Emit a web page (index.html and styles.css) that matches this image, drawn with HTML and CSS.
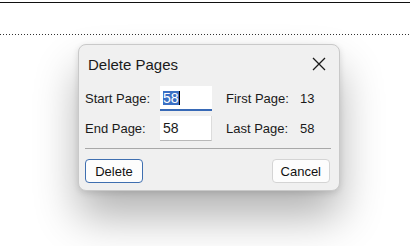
FILE: index.html
```html
<!DOCTYPE html>
<html lang="en">
<head>
    <meta charset="UTF-8">
    <meta name="viewport" content="width=device-width, initial-scale=1.0">
    <title>Delete Pages</title>
    <link rel="stylesheet" href="styles.css">
</head>
<body>
    <div class="page">
        <div class="rule-top"></div>
        <div class="rule-dotted"></div>

        <!-- Delete pages dialog -->
        <div class="dialog">
            <div class="dialog-title">
                <span>Delete Pages</span>
                <svg class="close" width="14" height="14" viewBox="0 0 14 14">
                    <path d="M1 1 L13 13 M13 1 L1 13" stroke="#1a1a1a" stroke-width="1.3" fill="none"/>
                </svg>
            </div>
            <div class="form">
                <label class="lbl">Start Page:</label>
                <div class="field focused"><span class="sel">58</span><span class="caret"></span></div>
                <span class="lbl info">First Page:</span>
                <span class="val">13</span>

                <label class="lbl">End Page:</label>
                <div class="field">58</div>
                <span class="lbl info">Last Page:</span>
                <span class="val">58</span>
            </div>
            <div class="separator"></div>
            <div class="actions">
                <button class="btn primary">Delete</button>
                <button class="btn">Cancel</button>
            </div>
        </div>
    </div>
</body>
</html>
```

FILE: styles.css
```css
body {
    margin: 0;
    padding: 0;
    background: #ffffff;
    font-family: "Liberation Sans", Arial, sans-serif;
    color: #1a1a1a;
}

.page {
    width: 411px;
    height: 246px;
    overflow: hidden;
}

.rule-top {
    margin-top: 2px;
    width: 410px;
    border-top: 1px solid #111;
}

/* dotted line under the header */
.rule-dotted {
    margin-top: 31px;
    width: 410px;
    height: 1px;
    background-image: linear-gradient(to right, #333 1px, transparent 1px);
    background-size: 3px 1px;
}

.dialog {
    margin: 9px 0 0 78px;
    width: 262px;
    height: 147px;
    box-sizing: border-box;
    background: #f0f0f0;
    border: 1px solid #c9c9c9;
    border-radius: 8px;
    box-shadow: 0 26px 44px rgba(0, 0, 0, 0.3), 0 2px 6px rgba(0, 0, 0, 0.12);
}

.dialog-title {
    display: flex;
    align-items: center;
    justify-content: space-between;
    height: 38px;
    padding: 0 13px 0 9px;
    font-size: 15px;
}

.close {
    display: block;
}

.form {
    display: grid;
    grid-template-columns: 75px 52px 88px auto;
    row-gap: 5px;
    padding: 3px 0 0 6px;
    font-size: 13px;
    align-items: center;
    white-space: nowrap;
}

.lbl {
    line-height: 25px;
}

.info {
    padding-left: 14px;
}

.field {
    height: 25px;
    box-sizing: border-box;
    background: #fff;
    padding: 0 0 0 3px;
    font-size: 14px;
    border-bottom: 1px solid #b8b8b8;
    border-right: 1px solid #dcdcdc;
    display: flex;
    align-items: center;
}

.field.focused {
    border-bottom: 2px solid #3769b6;
    border-right: none;
}

.sel {
    background: #3a6fc4;
    color: #fff;
    line-height: 14px;
}

.caret {
    display: inline-block;
    width: 1px;
    height: 14px;
    background: #000;
}

.separator {
    margin: 7px 8px 0 6px;
    border-top: 1px solid #a8a8a8;
}

.actions {
    display: flex;
    justify-content: space-between;
    padding: 10px 9px 0 6px;
}

.btn {
    height: 24px;
    padding: 0 8px;
    font-family: "Liberation Sans", Arial, sans-serif;
    font-size: 13px;
    color: #111;
    background: #fdfdfd;
    border: 1px solid #d4d4d4;
    border-radius: 4px;
}

.btn.primary {
    width: 58px;
    border-color: #3f6fb0;
}
```
